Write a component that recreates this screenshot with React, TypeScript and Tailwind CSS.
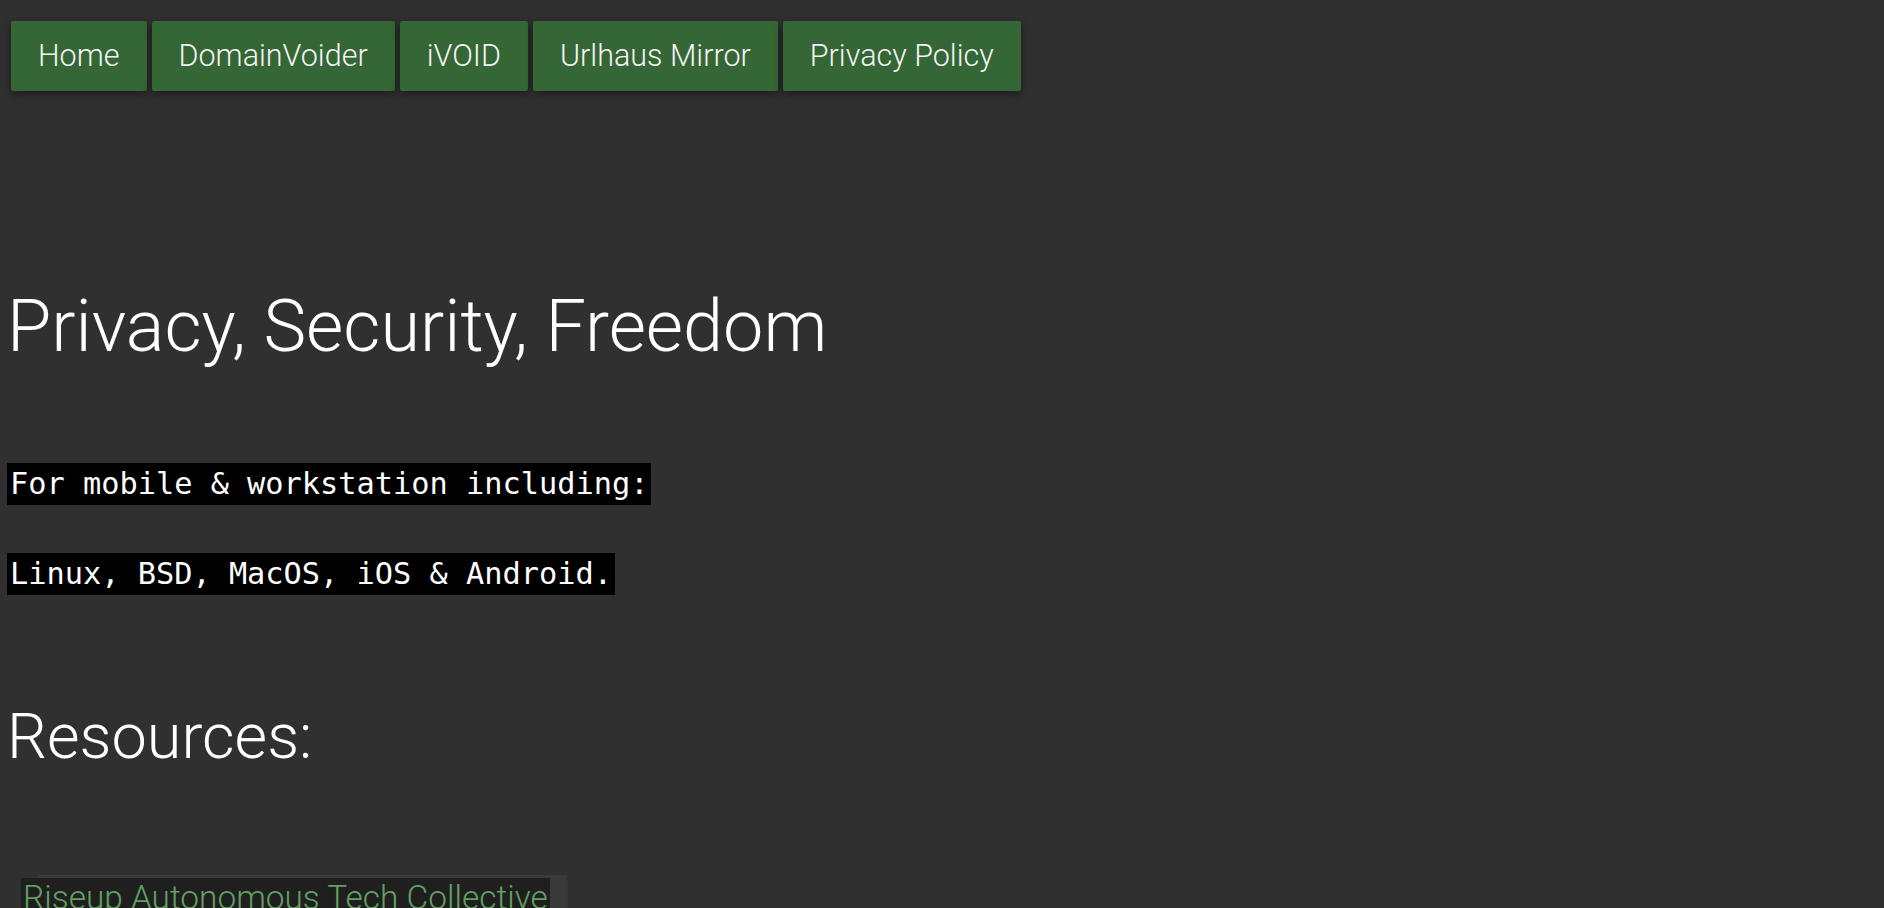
import React from "react";

const links = ["Home", "DomainVoider", "iVOID", "Urlhaus Mirror", "Privacy Policy"];

export default function App() {
  return (
    <div className="min-h-screen bg-[#303030] font-['Roboto',sans-serif] font-light text-white">
      <nav className="flex gap-[5px] pl-[11px] pt-[21px]">
        {links.map((l) => (
          <a
            key={l}
            href="#"
            className="flex h-[70px] items-center rounded-[2px] bg-[#356635] px-[27px] text-[30.5px] text-[#f4f4f4] shadow-[0_3px_8px_rgba(0,0,0,0.45)]"
          >
            {l}
          </a>
        ))}
      </nav>

      <main className="pl-[7px]">
        <h1 className="mt-[200px] text-[72px] leading-none font-light">
          Privacy, Security, Freedom
        </h1>

        <p className="mt-[100px] w-fit bg-black px-[3px] font-['DejaVu_Sans_Mono',monospace] text-[30.3px] leading-[42px] font-normal">
          For mobile &amp; workstation including:
        </p>
        <p className="mt-[48px] w-fit bg-black px-[3px] font-['DejaVu_Sans_Mono',monospace] text-[30.3px] leading-[42px] font-normal">
          Linux, BSD, MacOS, iOS &amp; Android.
        </p>

        <h2 className="mt-[110px] text-[63px] leading-none font-light">Resources:</h2>

        <ul className="mt-[110px] pl-[14px]">
          <li className="w-fit shadow-[17px_-3px_0_#393939]">
            <a href="#" className="block bg-[#1f1f1f] px-[2px] text-[33.4px] leading-[39px] text-[#62a062]">
              Riseup Autonomous Tech Collective
            </a>
          </li>
        </ul>
      </main>
    </div>
  );
}
